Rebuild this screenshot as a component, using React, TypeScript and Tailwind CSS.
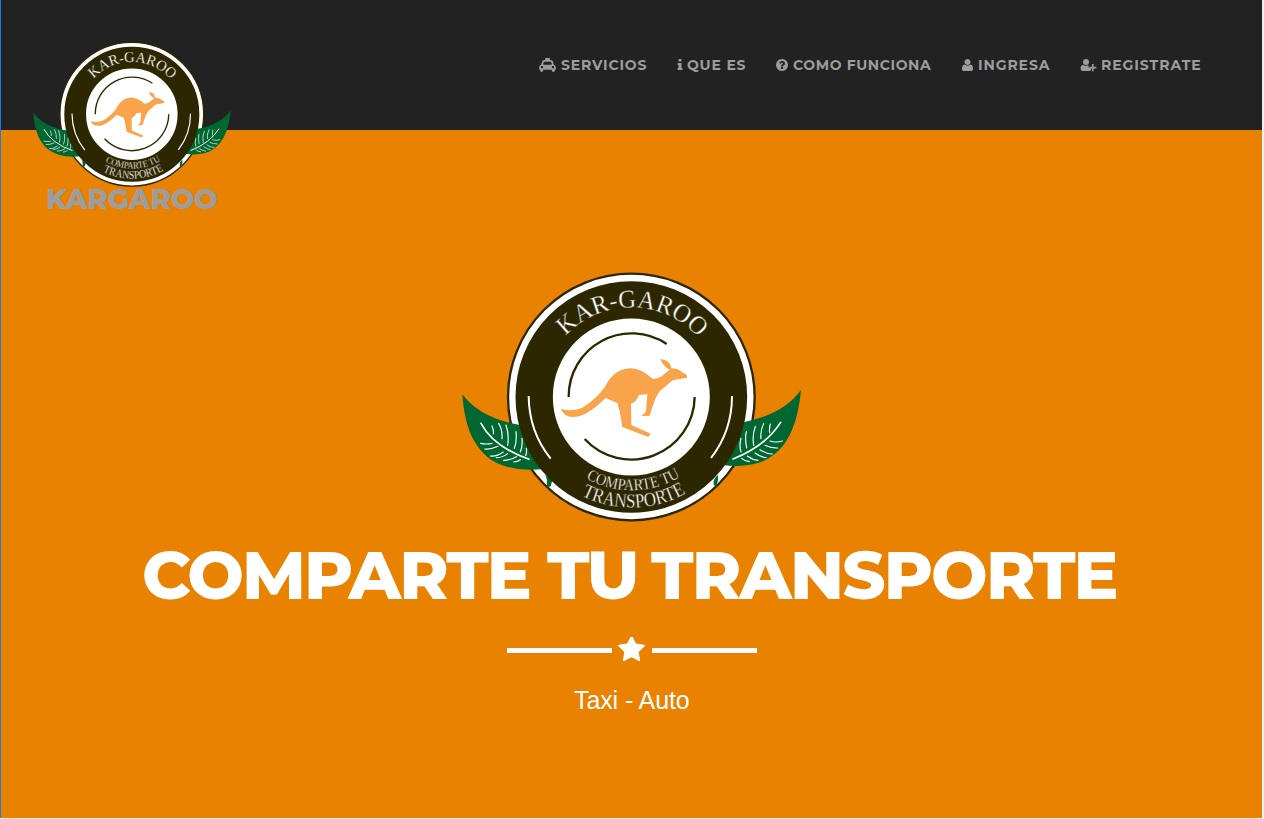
import { useId } from "react";

const PATHS = {
  info: "M1216 1344v128q0 26-19 45t-45 19h-512q-26 0-45-19t-19-45v-128q0-26 19-45t45-19h64v-384h-64q-26 0-45-19t-19-45v-128q0-26 19-45t45-19h384q26 0 45 19t19 45v576h64q26 0 45 19t19 45zm-128-1152v192q0 26-19 45t-45 19h-256q-26 0-45-19t-19-45v-192q0-26 19-45t45-19h256q26 0 45 19t19 45z",
  question:
    "M1024 1376v-192q0-14-9-23t-23-9h-192q-14 0-23 9t-9 23v192q0 14 9 23t23 9h192q14 0 23-9t9-23zm256-672q0-88-55.5-163t-138.5-116-170-41q-243 0-371 213-15 24 8 42l132 100q7 6 19 6 16 0 25-12 53-68 86-92 34-24 86-24 48 0 85.5 26t37.5 59q0 38-20 61t-68 45q-63 28-115.5 86.5t-52.5 125.5v36q0 14 9 23t23 9h192q14 0 23-9t9-23q0-19 21.5-49.5t54.5-49.5q32-18 49-28.5t46-35 44.5-48 28-60.5 12.5-81zm384 192q0 209-103 385.5t-279.5 279.5-385.5 103-385.5-103-279.5-279.5-103-385.5 103-385.5 279.5-279.5 385.5-103 385.5 103 279.5 279.5 103 385.5z",
  user: "M1600 1405q0 120-73 189.5t-194 69.5h-874q-121 0-194-69.5t-73-189.5q0-53 3.5-103.5t14-109 26.5-108.5 43-97.5 62-81 85.5-53.5 111.5-20q9 0 42 21.5t74.5 48 108 48 133.5 21.5 133.5-21.5 108-48 74.5-48 42-21.5q61 0 111.5 20t85.5 53.5 62 81 43 97.5 26.5 108.5 14 109 3.5 103.5zm-320-893q0 159-112.5 271.5t-271.5 112.5-271.5-112.5-112.5-271.5 112.5-271.5 271.5-112.5 271.5 112.5 112.5 271.5z",
  star: "M1728 647q0 22-26 48l-363 354 86 500q1 7 1 20 0 21-10.5 35.5t-30.5 14.5q-19 0-40-12l-449-236-449 236q-22 12-40 12-21 0-31.5-14.5t-10.5-35.5q0-6 2-20l86-500-364-354q-25-27-25-48 0-37 56-46l502-73 225-455q19-41 49-41t49 41l225 455 502 73q56 9 56 46z",
};

function TaxiIcon() {
  return (
    <svg viewBox="0 0 50 42" className="h-[14px] w-[17px] shrink-0" fill="currentColor">
      <path
        fillRule="evenodd"
        d="M18 0h14v6h3q5 0 6.500 5l2.500 9q6 1.500 6 8v7h-3v2q0 5-4.500 5t-4.500-5v-2H12v2q0 5-4.500 5T3 37v-2H0v-7q0-6.500 6-8l2.500-9Q10 6 15 6h3zM16 11q-2 0-2.500 2l-1.500 7h26l-1.500-7q-.5-2-2.500-2zM8.500 24a3.500 3.500 0 100 7 3.500 3.500 0 000-7zm33 0a3.500 3.500 0 100 7 3.500 3.500 0 000-7z"
      />
    </svg>
  );
}

function UserPlusIcon() {
  return (
    <svg viewBox="0 0 2048 1792" className="h-[14px] w-[17px] shrink-0" fill="currentColor">
      <path d="M704 896a384 384 0 110-768 384 384 0 010 768z" />
      <path d="M1025 960v250q0 60 60 60h250v300q-60 90-190 90H270Q0 1650 0 1390q0-500 330-540 190 150 374 150 170 0 321-100z" />
      <path d="M1470 770h210v350h350v210h-350v350h-210v-350h-350v-210h350z" />
    </svg>
  );
}

function Logo({ className }: { className: string }) {
  const id = useId();
  return (
    <svg viewBox="0 0 1065 795" className={className} role="img">
      <defs>
        <path id={`${id}a`} d="M332 213A269 269 0 0 1 740 230" />
        <path id={`${id}b`} d="M393 640A281 281 0 0 0 690 626" />
        <path id={`${id}c`} d="M380 692A332 332 0 0 0 700 681" />
      </defs>
      <circle cx="529" cy="396" r="370" fill="#fff" stroke="#2d2700" strokeWidth="7" />
      <g fill="#006731">
        <path d="M22 388Q75 460 195 480L265 612Q165 623 105 582C50 540 28 475 22 388z" />
        <path d="M1038 375Q985 448 868 471L800 600Q905 613 958 568C1008 530 1030 458 1038 375z" />
        <path d="M270 630q9 12 5 38l12-4 5-18z" />
        <path d="M789 630q-16 12-13 29l8 7 5-21z" />
      </g>
      <g fill="none" stroke="#fff" strokeLinecap="round" strokeWidth="3.500">
        <path strokeWidth="5" d="M78 475Q115 545 222 583" />
        <path d="M111 483q6 13 4 24M131 475q12 20 10 46M153 480q10 30 5 61M183 500q3 30-5 50M201 520q2 25-5 41M214 550q2 12-2 22M77 535q18 4 34 0M89 552q18 2 40-8M106 573q20 2 39-12M124 578q19 0 34-12M146 586q20 0 38-11M176 591q12-1 20-7" />
        <path strokeWidth="5" d="M977 472Q930 545 834 582" />
        <path d="M946 477q-4 15-2 26M926 476q-11 21-8 45M901 484q-10 27-5 57M874 500q-5 20 1 49M858 520q-6 22 0 41M982 528q-20 6-37 0M968 549q-20 1-38-8M952 567q-16 1-37-13M933 578q-16-1-33-14M909 586q-16-1-32-13M883 590q-14-2-23-10" />
      </g>
      <circle cx="529" cy="396" r="236" fill="#fff" />
      <circle cx="529" cy="396" r="291.500" fill="none" stroke="#2d2700" strokeWidth="112" />
      <g fill="none" stroke="#2d2700" strokeWidth="7">
        <path d="M341 396A189 189 0 0 1 635 237" />
        <path d="M719 396A190 190 0 0 1 389 522" />
      </g>
      <g fill="none" stroke="#fff" strokeWidth="6">
        <path d="M221 393Q222 500 287 581" />
        <path d="M831 393Q831 498 768 579" />
      </g>
      <path
        transform="translate(285 165)"
        fill="#f9a34b"
        d="M33 266Q63 277 96 264Q140 236 165 200C184 163 208 146 242 145Q276 146 308 177Q330 176 342 163L359 149Q338 138 331 117Q353 120 360 132L364 145Q384 145 399 158Q413 163 411 173L368 181L329 214Q316 229 299 287L274 288L288 275L292 223L267 225Q259 246 243 251L244 315L302 341L295 351L217 321Q209 265 202 249L167 234Q123 278 87 289Q42 297 33 266z"
      />
      <g fill="#fff" stroke="#2d2700" strokeWidth="1" fontFamily="'Liberation Serif', serif">
        <text fontSize="77">
          <textPath href={`#${id}a`} textLength="448" lengthAdjust="spacingAndGlyphs">KAR-GAROO</textPath>
        </text>
        <text fontSize="49">
          <textPath href={`#${id}b`} textLength="297" lengthAdjust="spacingAndGlyphs">COMPARTE TU</textPath>
        </text>
        <text fontSize="60">
          <textPath href={`#${id}c`} textLength="326" lengthAdjust="spacingAndGlyphs">TRANSPORTE</textPath>
        </text>
      </g>
    </svg>
  );
}

export default function App() {
  return (
    <div className="h-[819px] w-[1264px] overflow-hidden bg-[#f0f0f0] font-['Montserrat','Inter',sans-serif]">
      <div className="h-[818px] w-[1262px] border-l border-[#1a7fd4] bg-[#e88200]">
        <header className="flex h-[130px] items-start justify-between bg-[#222222] text-[#9d9d9d]">
          <a className="ml-[28px] mt-[37px] flex w-[207px] flex-col">
            <Logo className="h-[155px] w-[207px]" />
            <span className="-mt-[7px] ml-[17px] whitespace-nowrap text-[28px] font-extrabold leading-[29px] tracking-[-0.4px]">KARGAROO</span>
          </a>
          <nav className="flex pt-[55px] text-[14px] font-bold leading-[20px] tracking-[0.7px]">
            <a className="flex w-[138px] items-center gap-[5px]"><TaxiIcon /><span className="tracking-[0.8px]">SERVICIOS</span></a>
            <a className="flex w-[99px] items-center gap-[4px]">
              <svg viewBox="576 0 640 1792" className="h-[14px] w-[6px] shrink-0" fill="currentColor"><path d={PATHS.info} /></svg>
              <span className="whitespace-nowrap tracking-[0.8px]">QUE ES</span>
            </a>
            <a className="flex w-[186px] items-center gap-[5px]">
              <svg viewBox="128 0 1536 1792" className="h-[14px] w-[12px] shrink-0" fill="currentColor"><path d={PATHS.question} /></svg>
              <span className="whitespace-nowrap tracking-[0.6px]">COMO FUNCIONA</span>
            </a>
            <a className="flex w-[118px] items-center gap-[5px]">
              <svg viewBox="192 0 1408 1792" className="h-[14px] w-[11px] shrink-0" fill="currentColor"><path d={PATHS.user} /></svg>
              <span className="tracking-[0.9px]">INGRESA</span>
            </a>
            <a className="flex w-[182px] items-center gap-[4px]"><UserPlusIcon /><span className="tracking-[0.95px]">REGISTRATE</span></a>
          </nav>
        </header>
        <main className="flex flex-col pt-[135px] text-white">
          <Logo className="ml-[454px] h-[265px] w-[355px]" />
          <h1 className="ml-[141px] mt-[9px] flex h-[73px] whitespace-nowrap text-[67px] font-extrabold leading-[72px] tracking-[-1.9px]">
            <span className="w-[405px]">COMPARTE</span>
            <span className="w-[104px]">TU</span>
            <span>TRANSPORTE</span>
          </h1>
          <div className="ml-[506px] mt-[24px] flex h-[28px] w-[250px] items-center justify-between">
            <span className="h-[5px] w-[105px] bg-white" />
            <svg viewBox="64 128 1664 1587" className="mr-px h-[26px] w-[27px]" fill="currentColor"><path d={PATHS.star} /></svg>
            <span className="h-[5px] w-[105px] bg-white" />
          </div>
          <p className="ml-[573px] mt-[21px] whitespace-nowrap font-['Liberation_Sans',Arial,sans-serif] text-[25px] leading-[30px] tracking-[-0.1px]">Taxi - Auto</p>
        </main>
      </div>
    </div>
  );
}
